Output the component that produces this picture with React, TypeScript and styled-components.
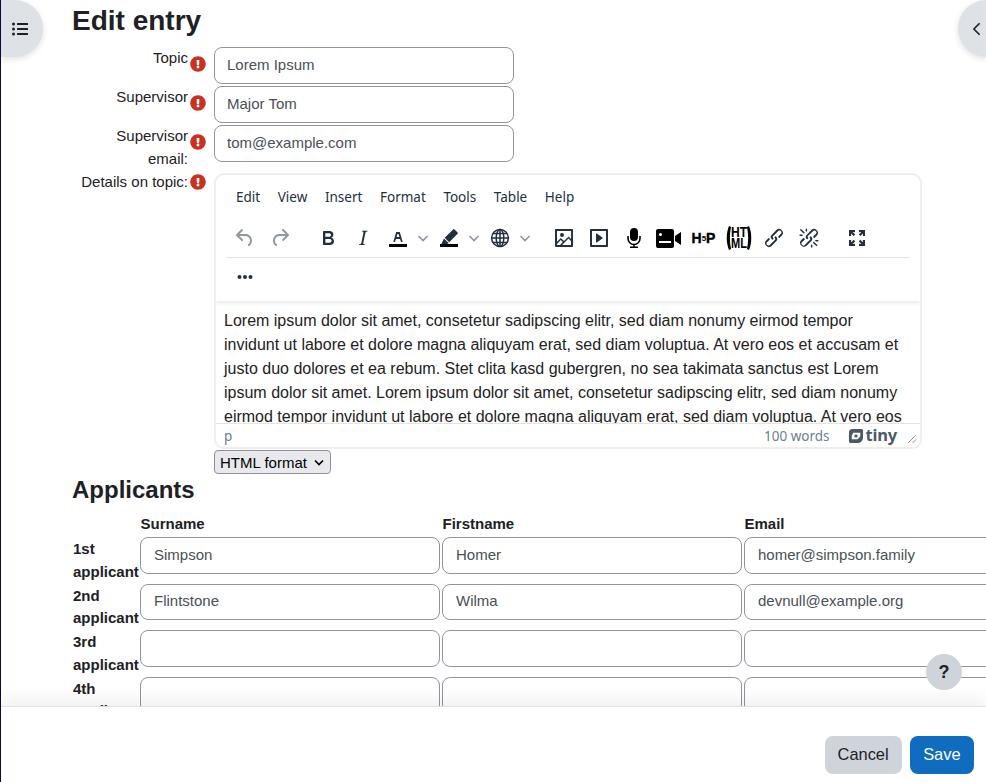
import React from "react";
import styled, { createGlobalStyle } from "styled-components";
import { ChevronLeft } from "lucide-react";
import { FaExclamationCircle, FaListUl } from "react-icons/fa";

const GlobalStyle = createGlobalStyle`
  html, body {
    margin: 0;
    padding: 0;
    height: 100%;
    overflow: hidden;
    background: #fff;
    color: #1d2125;
    font-family: "Liberation Sans", Arial, sans-serif;
    font-size: 15px;
    line-height: 22.5px;
  }
`;

const Page = styled.div`
  position: relative;
  display: flex;
  flex-direction: column;
  height: 782px;
  width: 986px;
  overflow: hidden;
  border-left: 1px solid #0b0b3b;
  box-sizing: border-box;
`;

const Content = styled.main`
  flex: 1;
  min-height: 0;
  overflow: hidden;
  padding: 4px 0 0 71px;
`;

const Title = styled.h2`
  margin: 0 0 9px;
  font-size: 28px;
  line-height: 34px;
  font-weight: 700;
`;

const FormRow = styled.div`
  display: grid;
  grid-template-columns: 116px 26px 708px;
  min-height: 39px;
`;

const Label = styled.label`
  padding: 0 0 1px 8px;
  text-align: right;
`;

const Required = styled.span<{ $top: number }>`
  display: block;
  padding: ${(p) => p.$top}px 0 0 2px;
  color: #ca3120;
  font-size: 16px;
  line-height: 16px;
  svg {
    display: block;
  }
`;

const Input = styled.input`
  display: block;
  box-sizing: border-box;
  width: 300px;
  height: 36.5px;
  padding: 5px 12px 7px;
  border: 1px solid #8f959e;
  border-radius: 8px;
  background: #fff;
  color: #495057;
  font: 15px/22.5px "Liberation Sans", Arial, sans-serif;
`;

const TableInput = styled(Input)`
  padding-left: 13px;
`;

const Editor = styled.div`
  box-sizing: border-box;
  width: 708px;
  height: 276px;
  margin-top: 2px;
  border: 2px solid #eee;
  border-radius: 10px;
  overflow: hidden;
  display: flex;
  flex-direction: column;
`;

const EditorHeader = styled.div`
  height: 126px;
  flex: none;
  position: relative;
  box-shadow: 0 2px 4px rgba(34, 47, 62, 0.1);
  font-family: "Noto Sans", sans-serif;
`;

const MenuBar = styled.div`
  display: flex;
  height: 44px;
  align-items: center;
  padding-left: 20px;
  gap: 17.6px;
  font-size: 13.5px;
  color: #222f3e;
`;

const ToolRow = styled.div<{ $divider?: boolean }>`
  display: flex;
  align-items: center;
  height: ${(p) => (p.$divider ? 38 : 37)}px;
  margin: 0 10px;
  padding-left: 1px;
  border-bottom: ${(p) => (p.$divider ? "1px solid #e3e3e3" : "none")};
`;

const ToolGroup = styled.div`
  display: flex;
  align-items: center;
  margin-right: 13px;
`;

const Tool = styled.span<{ $disabled?: boolean }>`
  display: flex;
  align-items: center;
  justify-content: center;
  width: 35px;
  height: 34px;
  color: ${(p) => (p.$disabled ? "rgba(34, 47, 62, 0.5)" : "#222f3e")};
  svg {
    fill: currentColor;
  }
`;

const Chevron = styled.span`
  display: flex;
  align-items: center;
  justify-content: center;
  width: 16px;
  height: 34px;
  svg {
    fill: none;
    stroke: #8c97a3;
    stroke-width: 1.6;
  }
`;

const H5pMark = styled.span`
  display: flex;
  align-items: center;
  font: 700 14px/1 "Liberation Sans", sans-serif;
  color: #000;
  -webkit-text-stroke: 0.4px #000;
  small {
    font-size: 8px;
    -webkit-text-stroke: 0;
    margin-top: 2px;
  }
`;

const Body = styled.div`
  flex: 1;
  min-height: 0;
  overflow: hidden;
  padding: 8px 15px 0 8px;
  font-size: 16px;
  line-height: 24px;
  color: #222;
`;

const StatusBar = styled.div`
  flex: none;
  height: 23px;
  position: relative;
  display: flex;
  align-items: center;
  padding: 0 23px 0 8px;
  border-top: 1px solid #e3e3e3;
  font: 13.5px "Noto Sans", sans-serif;
  color: #6d7f8f;
  background: #fff;
`;

const StatusPath = styled.span`
  flex: 1;
`;

const Brand = styled.span`
  display: flex;
  align-items: center;
  gap: 2px;
  margin-left: 18px;
  font: 700 16.5px/1 "Noto Sans", sans-serif;
  letter-spacing: -0.2px;
  color: #4a5965;
  svg {
    fill: #4a5965;
  }
`;

const Grip = styled.svg`
  position: absolute;
  right: 3px;
  bottom: 3px;
  stroke: #8c97a3;
`;

const FormatSelect = styled.select`
  display: block;
  appearance: none;
  box-sizing: border-box;
  margin: 1px 0 0 142px;
  padding: 0 0 0 5px;
  font: 15px "Liberation Sans", Arial, sans-serif;
  height: 24px;
  width: 117px;
  color: #000;
  background: #e9e9ed url("data:image/svg+xml;utf8,<svg xmlns='http://www.w3.org/2000/svg' width='12' height='12'><path d='M2 4.5 6 8.5 10 4.5' fill='none' stroke='black' stroke-width='1.7'/></svg>") no-repeat right 5px center;
  border: 1px solid #8f8f9d;
  border-radius: 4px;
`;

const Heading = styled.h3`
  margin: 1px 0 8px;
  font-size: 24px;
  line-height: 29px;
  font-weight: 700;
`;

const ApplicantGrid = styled.div`
  display: grid;
  grid-template-columns: 68px 302px 302px 302px;
  grid-template-rows: 25px;
  grid-auto-rows: 46.5px;
  width: 974px;
`;

const HeaderCell = styled.div`
  padding: 1px 0 0 0.5px;
  font-weight: 700;
`;

const RowLabel = styled.div`
  padding: 1px 0 0 1px;
  font-weight: 700;
  box-sizing: border-box;
`;

const Toggle = styled.button<{ $side: "left" | "right" }>`
  position: absolute;
  top: 0;
  ${(p) => p.$side}: ${(p) => (p.$side === "left" ? "0" : "-1px")};
  width: ${(p) => (p.$side === "left" ? 42 : 29)}px;
  height: 57px;
  padding: ${(p) => (p.$side === "left" ? "0 5px 0 0" : "0 0 0 8px")};
  border: 0;
  display: flex;
  align-items: center;
  justify-content: center;
  background: #dee2e6;
  color: #1d2125;
  box-shadow: 0 2px 6px rgba(0, 0, 0, 0.12);
  border-radius: ${(p) => (p.$side === "left" ? "0 30px 30px 0" : "30px 0 0 30px")};
`;

const HelpButton = styled.button`
  position: absolute;
  left: 925px;
  top: 654px;
  width: 36px;
  height: 36px;
  padding: 1px 0 0;
  border: 0;
  border-radius: 50%;
  background: #ced4da;
  color: #1d2125;
  font: 700 18px "Liberation Sans", Arial, sans-serif;
  z-index: 3;
`;

const Footer = styled.footer`
  position: relative;
  z-index: 2;
  flex: none;
  box-sizing: border-box;
  height: 76px;
  display: flex;
  justify-content: flex-end;
  align-items: flex-end;
  gap: 8px;
  padding: 0 12px 8px 0;
  background: #fff;
  border-top: 1px solid #dee2e6;
  box-shadow: 0 -8px 16px rgba(0, 0, 0, 0.06);
`;

const ActionButton = styled.button<{ $primary?: boolean }>`
  height: 38px;
  padding: 0 ${(p) => (p.$primary ? 13.5 : 13)}px 1px;
  border: 0;
  border-radius: 8px;
  font: 16.4px "Liberation Sans", Arial, sans-serif;
  background: ${(p) => (p.$primary ? "#0f6cbf" : "#ced4da")};
  color: ${(p) => (p.$primary ? "#fff" : "#1d2125")};
`;

const Icon = ({ d }: { d: string }) => (
  <svg width="24" height="24" viewBox="0 0 24 24" aria-hidden="true">
    <path d={d} />
  </svg>
);

const Caret = () => (
  <Chevron>
    <svg width="12" height="12" viewBox="0 0 12 12" aria-hidden="true">
      <path d="M1.5 4 6 8.5 10.5 4" />
    </svg>
  </Chevron>
);

const paths = {
  undo: "M6.4 8H12c3.7 0 6.2 2 6.8 5.1.6 2.7-.4 5.6-2.3 6.8a1 1 0 01-1-1.8c1.1-.6 1.8-2.7 1.4-4.6-.5-2.1-2.1-3.5-4.9-3.5H6.4l3.3 3.3a1 1 0 11-1.4 1.4l-5-5a1 1 0 010-1.4l5-5a1 1 0 011.4 1.4L6.4 8z",
  redo: "M17.6 10H12c-2.8 0-4.4 1.4-4.9 3.5-.4 2 .3 4 1.4 4.6a1 1 0 11-1 1.8c-2-1.2-2.9-4.1-2.3-6.8.6-3 3-5.1 6.8-5.1h5.6l-3.3-3.3a1 1 0 111.4-1.4l5 5a1 1 0 010 1.4l-5 5a1 1 0 01-1.4-1.4l3.3-3.3z",
  bold: "M7.8 19c-.3 0-.5 0-.6-.2l-.2-.5V5.7c0-.2 0-.4.2-.5l.6-.2h5c1.5 0 2.7.3 3.5 1 .7.6 1.1 1.4 1.1 2.5a3 3 0 01-.6 1.9c-.4.6-1 1-1.6 1.2.4.1.9.3 1.3.6s.8.7 1 1.2c.4.4.5 1 .5 1.6 0 1.3-.4 2.3-1.3 3-.8.7-2.1 1-3.8 1H7.8zm5-8.3c.6 0 1.2-.1 1.6-.5.4-.3.6-.7.6-1.3 0-1.1-.8-1.7-2.3-1.7H9.3v3.5h3.4zm.5 6c.7 0 1.3-.1 1.7-.4.4-.4.6-.9.6-1.5s-.2-1-.7-1.4c-.4-.3-1-.4-2-.4H9.4v3.8h4z",
  italic: "M16.7 4.7l-.1.9h-.3c-.6 0-1 0-1.4.3-.3.3-.4.6-.5 1.1l-2.1 9.8v.6c0 .5.4.8 1.4.8h.2l-.2.8H8l.2-.8h.2c1.1 0 1.8-.5 2-1.5l2-9.8.1-.5c0-.6-.4-.8-1.4-.8h-.3l.2-.9h5.8z",
  letter: "M8.7 16h-.8a.5.5 0 01-.5-.6l2.7-9c.1-.3.3-.4.5-.4h2.8c.2 0 .4.1.5.4l2.7 9a.5.5 0 01-.5.6h-.8a.5.5 0 01-.4-.4l-.7-2.2c0-.3-.3-.4-.5-.4h-3.4c-.2 0-.4.1-.5.4l-.7 2.2c0 .3-.2.4-.4.4zm2.6-7.6l-.6 2a.5.5 0 00.5.6h1.6a.5.5 0 00.5-.6l-.6-2c0-.3-.3-.4-.5-.4h-.4c-.2 0-.4.1-.5.4z",
  marker: "M17.5 3.4l3.1 3a1 1 0 010 1.4l-8.4 8.4-4.5-4.5 8.4-8.3a1 1 0 011.4 0zM7 12.4l4.6 4.5-1.4 1.1H4.4z",
  image: "M5 15.7l3.3-3.2c.3-.3.7-.3 1 0L12 15l4.1-4c.3-.4.8-.4 1 0l2 1.9V5H5v10.7zM5 18V19h3l2.8-2.9-2-2L5 17.9zm14-3l-2.5-2.4-6.4 6.5H19v-4zM4 3h16c.6 0 1 .4 1 1v16c0 .6-.4 1-1 1H4a1 1 0 01-1-1V4c0-.6.4-1 1-1zm6 8a2 2 0 100-4 2 2 0 000 4z",
  embed: "M4 3h16c.6 0 1 .4 1 1v16c0 .6-.4 1-1 1H4a1 1 0 01-1-1V4c0-.6.4-1 1-1zm1 2v14h14V5H5zm4.8 2.6l5.6 4a.5.5 0 010 .8l-5.6 4A.5.5 0 019 16V8a.5.5 0 01.8-.4z",
  link: "M6.2 12.3a1 1 0 011.4 1.4l-2 2a2 2 0 102.6 2.8l4.8-4.8a1 1 0 000-1.4 1 1 0 111.4-1.3 2.9 2.9 0 010 4L9.6 20a3.9 3.9 0 01-5.5-5.5l2-2zm11.6-.6a1 1 0 01-1.4-1.4l2-2a2 2 0 10-2.6-2.8L11 10.3a1 1 0 000 1.4A1 1 0 119.6 13a2.9 2.9 0 010-4L14.4 4a3.9 3.9 0 015.5 5.5l-2 2z",
  unlink: "M6.2 12.3a1 1 0 011.4 1.4l-2.1 2a2 2 0 102.7 2.8l4.8-4.8a1 1 0 000-1.4 1 1 0 111.4-1.3 2.9 2.9 0 010 4l-4.8 4.7a3.9 3.9 0 01-5.5-5.5l2-2zm11.6-.6a1 1 0 01-1.4-1.4l2-2a2 2 0 10-2.6-2.8L10.9 10a1 1 0 000 1.4A1 1 0 119.6 13a2.9 2.9 0 010-4L14.4 4a3.9 3.9 0 015.5 5.5l-2 2zM7.6 6.3a.8.8 0 01-1 1.1L3.3 4.2a.7.7 0 111-1l3.2 3.1zM5.1 8.6a.8.8 0 010 1.5H3a.8.8 0 010-1.5H5zm5-3.5a.8.8 0 01-1.5 0V3a.8.8 0 011.5 0v2zm6 11.8a.8.8 0 011-1l3.2 3.2a.8.8 0 01-1 1L16 17zm-2.2 2a.8.8 0 011.5 0V21a.8.8 0 01-1.5 0V19zm5-3.5a.7.7 0 110-1.5H21a.8.8 0 010 1.5H19z",
  fullscreen: "M4 4h6v2.2L7.6 6l2.6 2.6-1.5 1.5L6 7.6 6.2 10H4zM20 4v6h-2.2l.2-2.4-2.7 2.5-1.5-1.5L16.4 6 14 6.2V4zM4 20v-6h2.2L6 16.4l2.7-2.6 1.5 1.5L7.6 18l2.4-.2V20zM20 20h-6v-2.2l2.4.2-2.6-2.7 1.5-1.5 2.7 2.6-.2-2.4H20z",
};

const HtmlMark = () => (
  <svg width="26" height="26" viewBox="0 0 26 26" aria-hidden="true" style={{ fill: "#000" }}>
    <path d="M3 1C0 8 0 18 3 25L5 24C3.500 17 3.500 9 5 2zM23 1C26 8 26 18 23 25L21 24C22.500 17 22.500 9 21 2z" />
    <text x="13" y="12" textAnchor="middle" fontFamily="Liberation Sans" fontWeight="700" fontSize="14" textLength="16" lengthAdjust="spacingAndGlyphs">HT</text>
    <text x="13" y="23" textAnchor="middle" fontFamily="Liberation Sans" fontWeight="700" fontSize="14" textLength="16" lengthAdjust="spacingAndGlyphs">ML</text>
  </svg>
);

const MicIcon = () => (
  <svg width="14" height="20" viewBox="0 0 14 20" aria-hidden="true" style={{ fill: "#000" }}>
    <rect x="3" y="0" width="8" height="13" rx="4" />
    <path d="M1 8v2.500a6 6 0 0012 0V8M7 16.500V19M3 19.200h8" fill="none" stroke="#000" strokeWidth="1.6" />
  </svg>
);

const BAR = "M3 18h18v3H3z";

const menuItems = ["Edit", "View", "Insert", "Format", "Tools", "Table", "Help"];

const applicants = [
  { label: "1st applicant", surname: "Simpson", firstname: "Homer", email: "homer@simpson.family" },
  { label: "2nd applicant", surname: "Flintstone", firstname: "Wilma", email: "devnull@example.org" },
  { label: "3rd applicant", surname: "", firstname: "", email: "" },
  { label: "4th applicant", surname: "", firstname: "", email: "" },
];

const LOREM =
  "Lorem ipsum dolor sit amet, consetetur sadipscing elitr, sed diam nonumy eirmod tempor invidunt ut labore et dolore magna aliquyam erat, sed diam voluptua. At vero eos et accusam et justo duo dolores et ea rebum. Stet clita kasd gubergren, no sea takimata sanctus est Lorem ipsum dolor sit amet. Lorem ipsum dolor sit amet, consetetur sadipscing elitr, sed diam nonumy eirmod tempor invidunt ut labore et dolore magna aliquyam erat, sed diam voluptua. At vero eos et accusam et justo duo dolores et ea rebum.";

const TextField = ({ label, value }: { label: string; value: string }) => (
  <FormRow>
    <Label>{label}</Label>
    <Required $top={9}>
      <FaExclamationCircle />
    </Required>
    <Input defaultValue={value} />
  </FormRow>
);

const App = () => {
  return (
    <Page>
      <GlobalStyle />
      <Toggle $side="left" aria-label="Open course index">
        <FaListUl size={16} />
      </Toggle>
      <Toggle $side="right" aria-label="Open block drawer">
        <ChevronLeft size={24} strokeWidth={2} />
      </Toggle>
      <Content>
        <Title>Edit entry</Title>
        <TextField label="Topic" value="Lorem Ipsum" />
        <TextField label="Supervisor" value="Major Tom" />
        <TextField label="Supervisor email:" value="tom@example.com" />
        <FormRow>
          <Label>Details on topic:</Label>
          <Required $top={3}>
            <FaExclamationCircle />
          </Required>
          <Editor>
            <EditorHeader>
              <MenuBar>
                {menuItems.map((item) => (
                  <span key={item}>{item}</span>
                ))}
              </MenuBar>
              <ToolRow $divider>
                <ToolGroup>
                  <Tool $disabled><Icon d={paths.undo} /></Tool>
                  <Tool $disabled><Icon d={paths.redo} /></Tool>
                </ToolGroup>
                <ToolGroup>
                  <Tool><Icon d={paths.bold} /></Tool>
                  <Tool><Icon d={paths.italic} /></Tool>
                  <Tool>
                    <svg width="24" height="24" viewBox="0 0 24 24" aria-hidden="true">
                      <path d={paths.letter} />
                      <path d={BAR} fill="#000" />
                    </svg>
                  </Tool>
                  <Caret />
                  <Tool>
                    <svg width="24" height="24" viewBox="0 0 24 24" aria-hidden="true">
                      <path d={paths.marker} />
                      <path d={BAR} fill="#000" />
                    </svg>
                  </Tool>
                  <Caret />
                  <Tool>
                    <svg width="20" height="20" viewBox="0 0 20 20" aria-hidden="true" style={{ fill: "none", stroke: "#222f3e", strokeWidth: 1.5 }}>
                      <circle cx="10" cy="10" r="8.4" />
                      <ellipse cx="10" cy="10" rx="3.8" ry="8.4" />
                      <path d="M10 1.6v16.8M1.6 10h16.8M3 5.500h14M3 14.500h14" />
                    </svg>
                  </Tool>
                  <Caret />
                </ToolGroup>
                <ToolGroup>
                  <Tool><Icon d={paths.image} /></Tool>
                  <Tool><Icon d={paths.embed} /></Tool>
                  <Tool><MicIcon /></Tool>
                  <Tool>
                    <svg width="25" height="19" viewBox="0 0 25 19" aria-hidden="true" style={{ fill: "#000" }}>
                      <path fillRule="evenodd" d="M2 0h14a2 2 0 012 2v15a2 2 0 01-2 2H2a2 2 0 01-2-2V2a2 2 0 012-2zm2.500 4a1.500 1.500 0 100 3 1.500 1.500 0 000-3zM3 12v2h12v-2z" />
                      <path d="M19 7l6-4v13l-6-4z" />
                    </svg>
                  </Tool>
                  <Tool>
                    <H5pMark>
                      H<small>5</small>P
                    </H5pMark>
                  </Tool>
                  <Tool><HtmlMark /></Tool>
                  <Tool><Icon d={paths.link} /></Tool>
                  <Tool><Icon d={paths.unlink} /></Tool>
                </ToolGroup>
                <ToolGroup>
                  <Tool><Icon d={paths.fullscreen} /></Tool>
                </ToolGroup>
              </ToolRow>
              <ToolRow>
                <Tool>
                  <svg width="24" height="24" viewBox="0 0 24 24" aria-hidden="true">
                    <circle cx="6.500" cy="12" r="2" />
                    <circle cx="12" cy="12" r="2" />
                    <circle cx="17.500" cy="12" r="2" />
                  </svg>
                </Tool>
              </ToolRow>
            </EditorHeader>
            <Body>{LOREM}</Body>
            <StatusBar>
              <StatusPath>p</StatusPath>
              <span>100 words</span>
              <Brand>
                <svg width="16" height="16" viewBox="0 0 17 17" aria-hidden="true">
                  <path fillRule="evenodd" d="M5 1h9a2 2 0 012 2v7a6 6 0 01-6 6H3a2 2 0 01-2-2V5a4 4 0 014-4zm.500 4L4 8.500V12h6l3-3V5z" />
                  <rect x="7" y="7" width="3" height="3" />
                </svg>
                tiny
              </Brand>
              <Grip width="10" height="10" viewBox="0 0 10 10" aria-hidden="true">
                <path d="M1 9 9 1M5.500 9 9 5.500" />
              </Grip>
            </StatusBar>
          </Editor>
        </FormRow>
        <FormatSelect defaultValue="html">
          <option value="html">HTML format</option>
        </FormatSelect>
        <Heading>Applicants</Heading>
        <ApplicantGrid>
          <HeaderCell />
          <HeaderCell>Surname</HeaderCell>
          <HeaderCell>Firstname</HeaderCell>
          <HeaderCell>Email</HeaderCell>
          {applicants.map((a) => (
            <React.Fragment key={a.label}>
              <RowLabel>{a.label}</RowLabel>
              <TableInput defaultValue={a.surname} />
              <TableInput defaultValue={a.firstname} />
              <TableInput defaultValue={a.email} />
            </React.Fragment>
          ))}
        </ApplicantGrid>
      </Content>
      <HelpButton aria-label="Help">?</HelpButton>
      <Footer>
        <ActionButton>Cancel</ActionButton>
        <ActionButton $primary>Save</ActionButton>
      </Footer>
    </Page>
  );
};

export default App;
